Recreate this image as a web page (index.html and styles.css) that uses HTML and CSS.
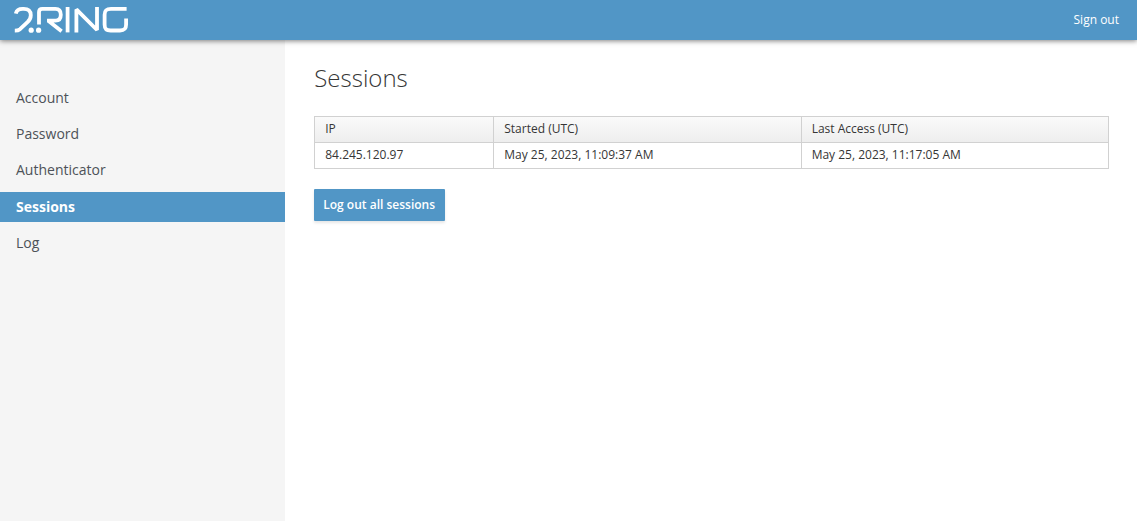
FILE: index.html
```html
<!DOCTYPE html>
<html lang="en">
<head>
<meta charset="utf-8">
<meta name="viewport" content="width=device-width, initial-scale=1">
<title>Sessions</title>
<link rel="stylesheet" href="styles.css">
</head>
<body>
<header class="topbar">
  <svg class="logo" viewBox="0 0 116 28" role="img" aria-label="2RING">
    <g fill="none" stroke="currentColor" stroke-width="3.8" stroke-linejoin="bevel">
      <path d="M1.8 7.6C2.5 4.6 5 2.9 8.6 2.9H9.8C14.4 2.9 16.8 5 16.8 9.2C16.8 12.3 15.8 14 13.5 16.2L6 23.2C4.6 24.4 3.4 24.7 .8 24.7"/>
      <path d="M25 18.5V6.2C25 3.8 26 2.9 28.4 2.9H41.5C45 2.9 46.8 4.8 46.8 8.7C46.8 12.6 45 14.6 41.5 14.6H33M34.6 15L47.6 25.2"/>
      <path d="M53.6 1V26.4"/>
      <path d="M62.4 26.4V3.4L83 24V1"/>
      <path d="M112.6 2.9H97C92.5 2.9 90.6 4.4 90.6 8.7V18.4C90.6 22.9 92.3 24.5 96.6 24.5H106C110.3 24.5 112.1 22.9 112.1 18.6V12.5"/>
    </g>
    <g fill="currentColor"><circle cx="17.2" cy="24.2" r="2.6"/><circle cx="24.6" cy="24.2" r="2.6"/></g>
  </svg>
  <a class="signout" href="#">Sign out</a>
</header>
<div class="layout">
  <nav class="sidebar" aria-label="Account management">
    <a class="nav-link" href="#">Account</a>
    <a class="nav-link" href="#">Password</a>
    <a class="nav-link" href="#">Authenticator</a>
    <a class="nav-link nav-link-active" href="#" aria-current="page">Sessions</a>
    <a class="nav-link" href="#">Log</a>
  </nav>
  <main class="content">
    <h1 class="title">Sessions</h1>
    <table class="sessions">
      <colgroup><col class="col-ip"><col class="col-date"><col class="col-date"></colgroup>
      <thead><tr><th scope="col">IP</th><th scope="col">Started (UTC)</th><th scope="col">Last Access (UTC)</th></tr></thead>
      <tbody><tr><td>84.245.120.97</td><td>May 25, 2023, 11:09:37 AM</td><td>May 25, 2023, 11:17:05 AM</td></tr></tbody>
    </table>
    <button class="button" type="button">Log out all sessions</button>
  </main>
</div>
</body>
</html>
```

FILE: styles.css
```css
* { box-sizing: border-box; }
body {
  margin: 0;
  min-height: 100vh;
  display: flex;
  flex-direction: column;
  background: #fff;
  color: #363636;
  font: 12px/18px "Open Sans", sans-serif;
}
.topbar {
  position: relative;
  display: flex;
  align-items: center;
  justify-content: space-between;
  height: 40px;
  padding: 0 18px 0 14px;
  background: #5196c6;
  color: #fff;
  box-shadow: 0 1px 5px rgba(0, 0, 0, 0.5);
}
.logo { width: 116px; height: 28px; }
.signout { color: #fff; text-decoration: none; }
.layout { flex: 1; display: flex; }
.sidebar {
  flex: 0 0 calc(25% + 1px);
  display: flex;
  flex-direction: column;
  gap: 6px;
  padding-top: 43px;
  background: #f5f5f5;
}
.nav-link {
  padding: 0 16px;
  color: #4d5258;
  font-size: 14px;
  line-height: 30px;
  text-decoration: none;
}
.nav-link-active { margin-top: 1px; background: #5196c6; color: #fff; font-weight: 700; }
.content { flex: 1; padding: 22px 28px 24px 29px; }
.title { margin: 0 0 22px; font-size: 24px; line-height: 32px; font-weight: 300; }
.sessions { width: 100%; border-collapse: collapse; table-layout: fixed; margin-bottom: 20px; }
.col-ip { width: 179px; }
.sessions thead { background: linear-gradient(#fafafa, #ededed); }
.sessions th, .sessions td {
  height: 26px;
  padding: 2px 10px 3px;
  border: 1px solid #d1d1d1;
  font-weight: 400;
  line-height: 18px;
  text-align: left;
}
.button {
  padding: 7px 10px 7px 9px;
  border: 0;
  border-radius: 1px;
  background: #5196c6;
  color: #fff;
  font: 600 12px/18px "Open Sans", sans-serif;
  box-shadow: 0 2px 3px rgba(3, 3, 3, 0.1);
}
```
